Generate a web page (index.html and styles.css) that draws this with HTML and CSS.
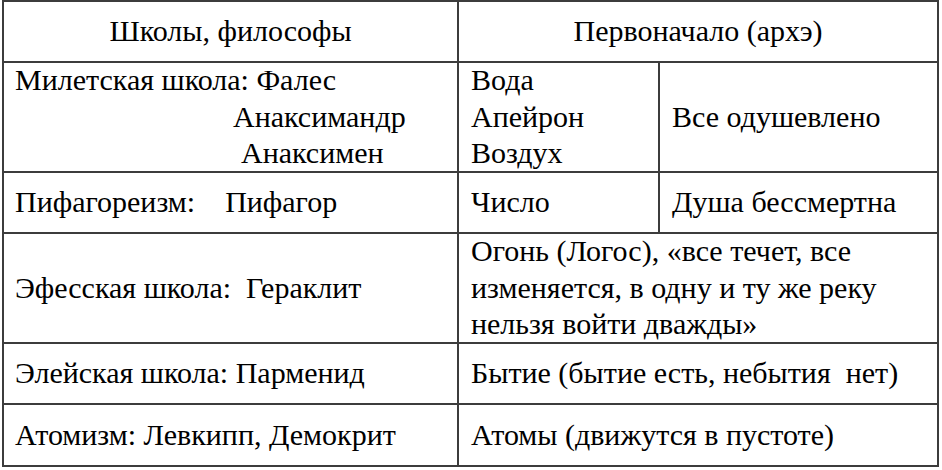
FILE: index.html
```html
<!DOCTYPE html>
<html>
<head>
<meta charset="utf-8">
<title>Table</title>
<link rel="stylesheet" href="styles.css">
</head>
<body>
<div class="grid">
<p class="cell head">Школы, философы</p>
<p class="cell head span2">Первоначало (архэ)</p>
<p class="cell c1"><span class="ln">Милетская школа: Фалес</span><span class="ln ind2">Анаксимандр</span><span class="ln ind3">Анаксимен</span></p>
<p class="cell"><span class="ln">Вода</span><span class="ln">Апейрон</span><span class="ln">Воздух</span></p>
<p class="cell">Все одушевлено</p>
<p class="cell c1">Пифагореизм:    Пифагор</p>
<p class="cell">Число</p>
<p class="cell">Душа бессмертна</p>
<p class="cell c1">Эфесская школа:  Гераклит</p>
<p class="cell span2"><span class="ln">Огонь (Логос), «все течет, все</span><span class="ln">изменяется, в одну и ту же реку</span><span class="ln">нельзя войти дважды»</span></p>
<p class="cell c1">Элейская школа: Парменид</p>
<p class="cell span2">Бытие (бытие есть, небытия  нет)</p>
<p class="cell c1">Атомизм: Левкипп, Демокрит</p>
<p class="cell span2">Атомы (движутся в пустоте)</p>
</div>
</body>
</html>
```
FILE: styles.css
```css
body {
  margin: 0;
  padding: 0 0 0 2px;
  background: #ffffff;
  font-family: "Times New Roman", "Liberation Serif", "Tinos", serif;
}
.grid {
  display: grid;
  grid-template-columns: 453px 199px 277px;
  grid-template-rows: 59px 108px 59px 108px 59px 60px;
  gap: 2px;
  padding: 2px;
  width: max-content;
  background: #3c3c3c;
  font-size: 30px;
  line-height: 36.5px;
}
.cell {
  margin: 0;
  background: #ffffff;
  display: flex;
  flex-direction: column;
  justify-content: center;
  padding: 0 8px 0 12px;
  white-space: pre;
  font-family: "Times New Roman", "Liberation Serif", "Tinos", serif;
}
.cell.c1 { padding-left: 11px; }
.cell.head {
  align-items: center;
  padding: 0;
}
.ln { display: block; }
.span2 { grid-column: span 2; }
.ind2 { margin-left: 218px; }
.ind3 { margin-left: 226px; }
```
